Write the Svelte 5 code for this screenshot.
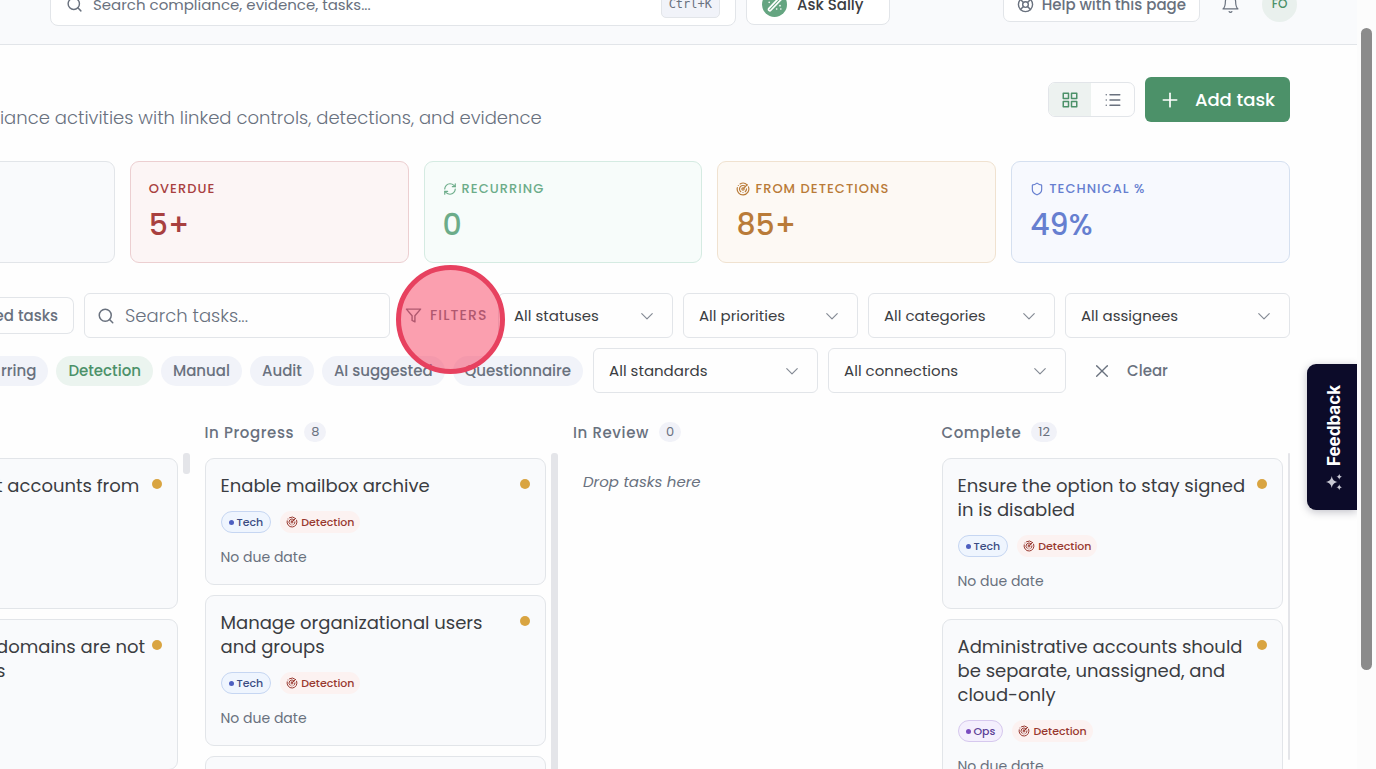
<script lang="ts">
  interface Stat {
    label: string;
    value: string;
    tone: string;
    icon?: IconName;
  }

  interface Task {
    title: string;
    kind: 'Tech' | 'Ops';
  }

  interface Column {
    name: string;
    count: number;
    rail: 'short' | 'full' | 'none' | 'thin';
    tasks: Task[];
  }

  type IconName = keyof typeof ICONS;

  // 24x24 stroke icons
  const ICONS = {
    search: ['M11 3a8 8 0 1 0 0 16a8 8 0 0 0 0-16z', 'm21 21-4.3-4.3'],
    help: [
      'M12 2a10 10 0 1 0 0 20a10 10 0 0 0 0-20z',
      'M12 8a4 4 0 1 0 0 8a4 4 0 0 0 0-8z',
      'm4.93 4.93 4.24 4.24',
      'm14.83 9.17 4.24-4.24',
      'm14.83 14.83 4.24 4.24',
      'm9.17 14.83-4.24 4.24',
    ],
    bell: [
      'M10.3 21a2 2 0 0 0 3.4 0',
      'M2.500 17.500h19C19.500 16 18.500 14 18.500 8.500a6.500 6.500 0 0 0-13 0C5.500 14 4.500 16 2.500 17.500z',
    ],
    grid: ['M3 3h7v7H3z', 'M14 3h7v7h-7z', 'M14 14h7v7h-7z', 'M3 14h7v7H3z'],
    list: ['M8 5h13', 'M8 12h13', 'M8 19h13', 'M3 5h.01', 'M3 12h.01', 'M3 19h.01'],
    plus: ['M4 12h16', 'M12 4v16'],
    refresh: [
      'M3 12a9 9 0 0 1 9-9 9.750 9.750 0 0 1 6.740 2.740L21 8',
      'M21 3v5h-5',
      'M21 12a9 9 0 0 1-9 9 9.750 9.750 0 0 1-6.740-2.740L3 16',
      'M8 16H3v5',
    ],
    radar: [
      'M19.070 4.930A10 10 0 0 0 6.990 3.340',
      'M4 6h.01',
      'M2.290 9.620A10 10 0 1 0 21.310 8.350',
      'M16.240 7.760A6 6 0 1 0 8.230 16.670',
      'M12 18h.01',
      'M17.990 11.660A6 6 0 0 1 15.770 16.670',
      'M12 10a2 2 0 1 0 0 4a2 2 0 0 0 0-4z',
      'm13.410 10.590 5.660-5.660',
    ],
    shield: [
      'M20 13c0 5-3.500 7.500-7.660 8.950a1 1 0 0 1-.670-.010C7.500 20.500 4 18 4 13V6a1 1 0 0 1 1-1c2 0 4.500-1.200 6.240-2.720a1.170 1.170 0 0 1 1.520 0C14.510 3.810 17 5 19 5a1 1 0 0 1 1 1z',
    ],
    filter: ['M22 3H2l8 9.460V19l4 2v-8.540z'],
    chevron: ['m3 8 9 9 9-9'],
    close: ['M20 4 4 20', 'm4 4 16 16'],
    wand: [
      'M4.500 17.500 17 4.500a1.500 1.500 0 0 1 2.500 2L7 19.500a1.500 1.500 0 0 1-2.500-2z',
      'M7 6h.01',
      'M11 4h.01',
      'M18 14h.01',
      'M14 18h.01',
      'M19 18h.01',
      'M5 10h.01',
    ],
  };

  const stats: Stat[] = [
    { label: '', value: '', tone: 'plain' },
    { label: 'Overdue', value: '5+', tone: 'red' },
    { label: 'Recurring', value: '0', tone: 'green', icon: 'refresh' },
    { label: 'From detections', value: '85+', tone: 'amber', icon: 'radar' },
    { label: 'Technical %', value: '49%', tone: 'blue', icon: 'shield' },
  ];

  const chips = ['rring', 'Detection', 'Manual', 'Audit', 'AI suggested', 'Questionnaire'];

  const columns: Column[] = [
    {
      name: '',
      count: 0,
      rail: 'short',
      tasks: [
        { title: 't accounts from', kind: 'Tech' },
        { title: 'domains are not\ns', kind: 'Tech' },
      ],
    },
    {
      name: 'In Progress',
      count: 8,
      rail: 'full',
      tasks: [
        { title: 'Enable mailbox archive', kind: 'Tech' },
        { title: 'Manage organizational users and groups', kind: 'Tech' },
        { title: '', kind: 'Tech' },
      ],
    },
    { name: 'In Review', count: 0, rail: 'none', tasks: [] },
    {
      name: 'Complete',
      count: 12,
      rail: 'thin',
      tasks: [
        { title: 'Ensure the option to stay signed in is disabled', kind: 'Tech' },
        { title: 'Administrative accounts should be separate, unassigned, and cloud-only', kind: 'Ops' },
      ],
    },
  ];

  let view = $state<'board' | 'list'>('board');
  let activeChip = $state('Detection');
</script>

{#snippet icon(name: IconName, size: number, stroke = 2)}
  <svg
    class="icon"
    width={size}
    height={size}
    viewBox="0 0 24 24"
    fill="none"
    stroke="currentColor"
    stroke-width={stroke}
    stroke-linecap="round"
    stroke-linejoin="round"
    aria-hidden="true"
  >
    {#each ICONS[name] as d}<path {d} />{/each}
  </svg>
{/snippet}

{#snippet picker(label: string, size: string)}
  <div class="picker {size}">
    <select aria-label={label}>
      <option>{label}</option>
    </select>
    {@render icon('chevron', 14, 2)}
  </div>
{/snippet}

<div class="app">
  <div class="page">
    <header>
      <label class="global-search">
        {@render icon('search', 17, 2)}
        <input type="text" placeholder="Search compliance, evidence, tasks..." aria-label="Search" />
        <kbd>Ctrl+K</kbd>
      </label>
      <button type="button" class="ask">
        <span class="ask-badge">{@render icon('wand', 20, 2)}</span>
        Ask Sally
      </button>
      <div class="account">
        <button type="button" class="help">{@render icon('help', 17, 2)} Help with this page</button>
        <button type="button" class="bell" aria-label="Notifications">{@render icon('bell', 19, 1.5)}</button>
        <button type="button" class="avatar">FO</button>
      </div>
    </header>

    <main>
      <div class="inset title-row">
        <p>iance activities with linked controls, detections, and evidence</p>
        <div class="view-toggle">
          <button type="button" class:on={view === 'board'} aria-label="Board view" onclick={() => (view = 'board')}>
            {@render icon('grid', 18, 2)}
          </button>
          <button type="button" class:on={view === 'list'} aria-label="List view" onclick={() => (view = 'list')}>
            {@render icon('list', 18, 2)}
          </button>
        </div>
        <button type="button" class="add">{@render icon('plus', 20, 2)} Add task</button>
      </div>

      <section class="stats">
        {#each stats as s}
          <div class="stat {s.tone}">
            <h2>
              {#if s.icon}{@render icon(s.icon, 14, 2)}{/if}
              {s.label}
            </h2>
            <strong>{s.value}</strong>
          </div>
        {/each}
      </section>

      <section class="inset filters">
        <div class="filter-row">
          <button type="button" class="tasks-button">ed tasks</button>
          <label class="task-search">
            {@render icon('search', 18, 2)}
            <input type="text" placeholder="Search tasks..." aria-label="Search tasks" />
          </label>
          <div class="filters-label">
            {@render icon('filter', 17, 2)}
            Filters
            <span class="spot"></span>
          </div>
          {@render picker('All statuses', 'sm')}
          {@render picker('All priorities', 'sm')}
          {@render picker('All categories', 'md')}
          {@render picker('All assignees', 'lg')}
        </div>
        <div class="filter-row">
          <div class="chips">
            {#each chips as c}
              <button type="button" class:on={activeChip === c} onclick={() => (activeChip = c)}>{c}</button>
            {/each}
          </div>
          {@render picker('All standards', 'lg')}
          {@render picker('All connections', 'xl')}
          <button type="button" class="clear">{@render icon('close', 16, 2)} Clear</button>
        </div>
      </section>

      <section class="board">
        {#each columns as col, i}
          <div class="column" class:cut={i === 0}>
            <h3>
              {#if col.name}
                {col.name} <span class="count">{col.count}</span>
              {/if}
            </h3>
            <div class="lane">
              <div class="cards">
                {#each col.tasks as t}
                  <article>
                    <div class="card-head">
                      <h4>{t.title}</h4>
                      <span class="priority"></span>
                    </div>
                    {#if i > 0}
                      <div class="tags">
                        <span class="tag {t.kind.toLowerCase()}"><i></i>{t.kind}</span>
                        <span class="tag detection">{@render icon('radar', 12, 2)}Detection</span>
                      </div>
                      <p class="due">No due date</p>
                    {/if}
                  </article>
                {:else}
                  <p class="empty">Drop tasks here</p>
                {/each}
              </div>
              <div class="rail {col.rail}"></div>
            </div>
          </div>
        {/each}
      </section>
    </main>

    <button type="button" class="feedback">
      <span>Feedback</span>
      <svg width="18" height="18" viewBox="0 0 24 24" fill="currentColor" aria-hidden="true">
        <path d="M9 4c1 5 3 7 8 8-5 1-7 3-8 8-1-5-3-7-8-8 5-1 7-3 8-8z" />
        <path d="M19 1c.500 2.500 1.500 3.500 4 4-2.500.500-3.500 1.500-4 4-.500-2.500-1.500-3.500-4-4 2.500-.500 3.500-1.500 4-4z" />
        <path d="M19 15c.500 2.500 1.500 3.500 4 4-2.500.500-3.500 1.500-4 4-.500-2.500-1.500-3.500-4-4 2.500-.500 3.500-1.500 4-4z" />
      </svg>
    </button>
  </div>
  <div class="scrollbar"><div class="thumb"></div></div>
</div>

<style>
  .app {
    --bleed: 164px;
    --line: #e2e5e9;
    --muted: #69717e;
    --ink: #3b3d42;
    --green: #4c9169;
    display: flex;
    height: 100vh;
    overflow: hidden;
    background: #fefefe;
    color: var(--muted);
    font-family: Poppins, Inter, sans-serif;
    font-size: 15px;
  }
  .app :global(*) {
    box-sizing: border-box;
  }
  .page {
    position: relative;
    flex: 1;
    min-width: 0;
    overflow: hidden;
  }
  button,
  input,
  select {
    font: inherit;
    color: inherit;
  }
  button {
    display: flex;
    align-items: center;
    padding: 0;
    border: none;
    background: none;
    cursor: pointer;
    white-space: nowrap;
  }
  input {
    flex: 1;
    min-width: 0;
    padding: 0;
    border: none;
    outline: none;
    background: none;
  }
  input::placeholder {
    color: var(--muted);
    opacity: 1;
  }
  h2,
  h3,
  h4,
  p {
    margin: 0;
  }
  .icon {
    flex: none;
  }

  /* top bar, scrolled partly out of view */
  header {
    display: flex;
    align-items: center;
    gap: 10px;
    height: 81px;
    margin-top: -36px;
    padding: 0 60px 0 50px;
    border-bottom: 1px solid var(--line);
    background: #f9fafc;
  }
  .global-search {
    display: flex;
    align-items: center;
    gap: 10px;
    width: 686px;
    height: 44px;
    padding: 0 15px;
    border: 1px solid var(--line);
    border-radius: 8px;
    background: #fff;
  }
  kbd {
    padding: 5px 7px;
    border: 1px solid var(--line);
    border-radius: 5px;
    background: #f1f3f9;
    font-family: "DejaVu Sans Mono", monospace;
    font-size: 12px;
    line-height: 16px;
  }
  .ask {
    gap: 10px;
    width: 144px;
    height: 42px;
    padding-left: 15px;
    border: 1px solid var(--line);
    border-radius: 8px;
    background: #fff;
    color: var(--ink);
    font-weight: 500;
  }
  .ask-badge {
    display: grid;
    place-items: center;
    width: 25px;
    height: 25px;
    border-radius: 50%;
    background: #65a581;
    color: #fff;
  }
  .account {
    display: flex;
    align-items: center;
    margin-left: auto;
  }
  .help {
    gap: 8px;
    height: 36px;
    padding: 0 13px;
    border: 1px solid var(--line);
    border-radius: 7px;
    background: #fff;
    font-weight: 500;
  }
  .bell {
    margin: 0 22px 0 21px;
  }
  .avatar {
    justify-content: center;
    width: 35px;
    height: 35px;
    border-radius: 50%;
    background: #e9f0ed;
    color: var(--green);
    font-size: 12px;
    font-weight: 500;
  }

  main {
    margin-left: calc(-1 * var(--bleed));
    padding: 32px 67px 0 0;
  }
  .inset {
    padding-left: var(--bleed);
  }
  .title-row {
    display: flex;
    align-items: flex-start;
    gap: 10px;
  }
  .title-row p {
    flex: 1;
    padding-top: 28px;
    font-size: 18px;
    font-weight: 300;
    line-height: 26px;
  }
  .view-toggle {
    display: flex;
    width: 87px;
    height: 35px;
    margin-top: 5px;
    border: 1px solid var(--line);
    border-radius: 7px;
    overflow: hidden;
  }
  .view-toggle button {
    flex: 1;
    justify-content: center;
  }
  .view-toggle .on {
    background: #edf2f0;
    color: var(--green);
  }
  .add {
    gap: 15px;
    height: 45px;
    padding: 0 15px;
    border-radius: 6px;
    background: var(--green);
    color: #fff;
    font-size: 18px;
    font-weight: 500;
  }

  .stats {
    display: grid;
    grid-template-columns: repeat(5, 1fr);
    gap: 15px;
    margin-top: 30px;
  }
  .stat {
    height: 102px;
    padding: 17px 18px;
    border: 1px solid var(--line);
    border-radius: 9px;
    background: #f9fafc;
  }
  .stat h2 {
    display: flex;
    align-items: center;
    gap: 5px;
    height: 20px;
    font-size: 13px;
    font-weight: 500;
    letter-spacing: 0.08em;
    text-transform: uppercase;
  }
  .stat strong {
    display: block;
    margin-top: 8px;
    font-size: 30px;
    font-weight: 500;
    line-height: 36px;
  }
  .stat.red {
    border-color: #eccfd1;
    background: #fcf5f5;
    color: #a8403f;
  }
  .stat.green {
    border-color: #d5ebe2;
    background: #f7fcfa;
    color: #6cac89;
  }
  .stat.amber {
    border-color: #f0e2d0;
    background: #fdf9f4;
    color: #b97b38;
  }
  .stat.blue {
    border-color: #d5e0f0;
    background: #f7f9fe;
    color: #667fd0;
  }

  .filters {
    display: flex;
    flex-direction: column;
    gap: 10px;
    margin-top: 30px;
  }
  .filter-row {
    display: flex;
    align-items: center;
    gap: 10px;
    height: 45px;
  }
  .tasks-button {
    justify-content: flex-end;
    width: 74px;
    height: 37px;
    padding-right: 15px;
    border: 1px solid var(--line);
    border-left: none;
    border-radius: 0 7px 7px 0;
    font-weight: 500;
  }
  .task-search {
    display: flex;
    align-items: center;
    gap: 10px;
    flex: 1;
    min-width: 0;
    height: 45px;
    padding: 0 12px;
    border: 1px solid var(--line);
    border-radius: 6px;
    font-size: 18px;
    font-weight: 300;
  }
  .filters-label {
    position: relative;
    display: flex;
    align-items: center;
    gap: 8px;
    width: 88px;
    padding-left: 5px;
    font-size: 14px;
    font-weight: 500;
    letter-spacing: 0.08em;
    text-transform: uppercase;
  }
  .spot {
    position: absolute;
    z-index: 2;
    top: 50%;
    left: 50%;
    width: 109px;
    height: 109px;
    margin: -51px 0 0 -48px;
    border: 5px solid #e7415f;
    border-radius: 50%;
    background: rgba(247, 64, 95, 0.5);
  }
  .picker {
    display: grid;
    align-items: center;
    height: 45px;
    border: 1px solid var(--line);
    border-radius: 6px;
    color: var(--ink);
  }
  .picker.sm {
    width: 175px;
  }
  .picker.md {
    width: 187px;
  }
  .picker.lg {
    width: 225px;
  }
  .picker.xl {
    width: 238px;
  }
  .picker select,
  .picker .icon {
    grid-area: 1 / 1;
  }
  .picker select {
    width: 100%;
    height: 43px;
    padding: 0 40px 0 15px;
    border: none;
    background: none;
    appearance: none;
  }
  .picker .icon {
    justify-self: end;
    margin-right: 18px;
    color: #858b95;
    pointer-events: none;
  }
  .chips {
    display: flex;
    gap: 8px;
  }
  .chips button {
    height: 30px;
    padding: 0 12px;
    border-radius: 15px;
    background: #f1f3f9;
    font-weight: 500;
  }
  .chips button:first-child {
    padding-left: 1px;
    border-radius: 0 15px 15px 0;
  }
  .chips .on {
    background: #ebf4ef;
    color: var(--green);
  }
  .clear {
    gap: 17px;
    margin-left: 18px;
    font-weight: 500;
  }

  .board {
    display: grid;
    grid-template-columns: repeat(4, minmax(0, 1fr));
    gap: 15px;
    margin: 29px -5px 0 0;
  }
  h3 {
    display: flex;
    align-items: center;
    gap: 10px;
    height: 20px;
    font-size: 15px;
    font-weight: 500;
    letter-spacing: 0.04em;
  }
  .count {
    padding: 0 7px;
    border-radius: 11px;
    background: #f1f2f8;
    font-size: 13px;
    font-weight: 400;
    line-height: 20px;
    letter-spacing: 0;
  }
  .lane {
    display: flex;
    gap: 5px;
    margin-top: 11px;
  }
  .cards {
    display: flex;
    flex: 1;
    flex-direction: column;
    gap: 10px;
    min-width: 0;
    padding-top: 5px;
  }
  article {
    padding: 15px 15px 16px;
    border: 1px solid var(--line);
    border-radius: 9px;
    background: #f9fafc;
  }
  .card-head {
    display: flex;
    align-items: flex-start;
    gap: 10px;
  }
  h4 {
    flex: 1;
    min-width: 0;
    min-height: 24px;
    color: var(--ink);
    font-size: 18px;
    font-weight: 400;
    line-height: 24px;
  }
  .priority {
    flex: none;
    width: 10px;
    height: 10px;
    margin-top: 5px;
    border-radius: 50%;
    background: #d9a441;
  }
  .cut article {
    min-height: 151px;
    padding-left: calc(var(--bleed) - 5px);
  }
  .cut h4 {
    white-space: pre;
  }
  .tags {
    display: flex;
    gap: 9px;
    margin-top: 13px;
  }
  .tag {
    display: flex;
    align-items: center;
    gap: 3px;
    height: 22px;
    padding: 0 7px;
    border: 1px solid transparent;
    border-radius: 11px;
    font-size: 11px;
    font-weight: 500;
  }
  .tag i {
    width: 5px;
    height: 5px;
    border-radius: 50%;
    background: #4d5fc0;
  }
  .tag.tech {
    border-color: #c6d6f2;
    background: #eff5fe;
    color: #3b4c83;
  }
  .tag.ops {
    border-color: #d6c8ee;
    background: #f4effd;
    color: #5c3f96;
  }
  .tag.ops i {
    background: #7a4cc0;
  }
  .tag.detection {
    padding: 0 5px;
    background: #fcf2f1;
    color: #98382f;
  }
  .due {
    margin-top: 13px;
    font-size: 14px;
    line-height: 22px;
  }
  .empty {
    padding: 13px 10px;
    font-style: italic;
    line-height: 22px;
  }
  .rail {
    width: 7px;
    border-radius: 3px;
    background: #e4e5e9;
  }
  .rail.short {
    height: 21px;
  }
  .rail.none {
    background: none;
  }
  .rail.thin {
    width: 2px;
    height: 307px;
    margin-right: 5px;
  }

  .feedback {
    position: absolute;
    top: 364px;
    right: 0;
    flex-direction: column;
    justify-content: center;
    gap: 6px;
    width: 50px;
    height: 146px;
    padding: 2px 0 0 4px;
    border-radius: 9px 0 0 9px;
    background: #0c0b29;
    box-shadow: 0 2px 8px rgba(12, 11, 41, 0.25);
    color: #fff;
    font-family: Inter, sans-serif;
    font-size: 17px;
    font-weight: 700;
  }
  .feedback span {
    writing-mode: vertical-rl;
    transform: rotate(180deg);
  }
  .feedback svg {
    color: #c9c9d4;
  }

  .scrollbar {
    width: 19px;
    padding: 28px 4px 99px;
    background: #fcfcfc;
  }
  .thumb {
    height: 100%;
    border-radius: 6px;
    background: #8b8b8b;
  }
</style>
